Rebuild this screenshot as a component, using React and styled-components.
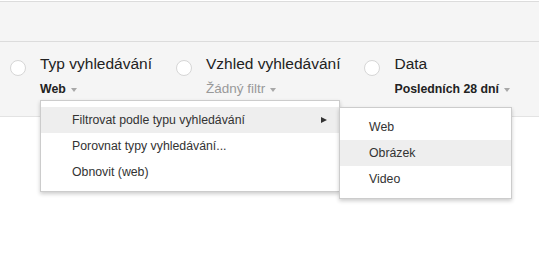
import React from 'react'
import styled, { createGlobalStyle } from 'styled-components'

const GlobalStyle = createGlobalStyle`
  body {
    margin: 0;
    background: #fff;
    font-family: "Liberation Sans", Arial, sans-serif;
  }
`

const filters = [
  { title: 'Typ vyhledávání', value: 'Web', bold: true },
  { title: 'Vzhled vyhledávání', value: 'Žádný filtr', bold: false },
  { title: 'Data', value: 'Posledních 28 dní', bold: true },
]

const menuItems = [
  { label: 'Filtrovat podle typu vyhledávání', sub: true, active: true },
  { label: 'Porovnat typy vyhledávání...' },
  { label: 'Obnovit (web)' },
]

const subItems = [
  { label: 'Web' },
  { label: 'Obrázek', active: true },
  { label: 'Video' },
]

function App() {
  return (
    <Page>
      <GlobalStyle />
      <TopBar />
      <FilterBar>
        {filters.map((f) => (
          <Group key={f.title}>
            <Radio />
            <Labels>
              <Title>{f.title}</Title>
              <Value bold={f.bold}>
                {f.value}
                <Caret />
              </Value>
            </Labels>
          </Group>
        ))}
        <Menu>
          {menuItems.map((item) => (
            <MenuItem key={item.label} active={item.active}>
              {item.label}
              {item.sub && <SubArrow />}
              {item.sub && (
                <SubMenu>
                  {subItems.map((s) => (
                    <MenuItem key={s.label} active={s.active} narrow>
                      {s.label}
                    </MenuItem>
                  ))}
                </SubMenu>
              )}
            </MenuItem>
          ))}
        </Menu>
      </FilterBar>
    </Page>
  )
}

export default App

const Page = styled.div`
  width: 539px;
  height: 255px;
  padding-top: 1px;
  box-sizing: border-box;
  overflow: hidden;
`
const TopBar = styled.div`
  height: 39px;
  background: #f5f5f5;
  border-top: 1px solid #dcdcdc;
  border-bottom: 1px solid #dcdcdc;
`
const FilterBar = styled.div`
  position: relative;
  height: 75px;
  box-sizing: border-box;
  padding: 12px 0 0 10px;
  display: flex;
  gap: 24px;
  background: #f5f5f5;
  border-bottom: 1px solid #e3e3e3;
`
const Group = styled.div`
  display: flex;
  align-items: flex-start;
`
const Radio = styled.span`
  width: 14px;
  height: 14px;
  margin-top: 6px;
  margin-right: 13px;
  border-radius: 50%;
  background: #fff;
  border: 1px solid #d6d6d6;
  flex-shrink: 0;
`
const Labels = styled.div`
  display: flex;
  flex-direction: column;
  padding-left: 1px;
`
const Title = styled.div`
  font-size: 15.5px;
  line-height: 20px;
  color: #222;
  white-space: nowrap;
`
const Value = styled.div`
  margin-top: 7px;
  display: flex;
  align-items: center;
  font-size: ${(p) => (p.bold ? '12.3px' : '13.5px')};
  font-weight: ${(p) => (p.bold ? 'bold' : 'normal')};
  color: ${(p) => (p.bold ? '#222' : '#999')};
  line-height: 16px;
  white-space: nowrap;
`
const Caret = styled.span`
  margin-left: 5px;
  margin-top: 2px;
  width: 0;
  height: 0;
  border-left: 3.5px solid transparent;
  border-right: 3.5px solid transparent;
  border-top: 4px solid #a8a8a8;
`
const Menu = styled.div`
  position: absolute;
  left: 40px;
  top: 58px;
  width: 298px;
  padding: 6px 0;
  background: #fff;
  border: 1px solid rgba(0, 0, 0, 0.2);
  box-shadow: 0 2px 4px rgba(0, 0, 0, 0.2);
  z-index: 2;
`
const MenuItem = styled.div`
  position: relative;
  height: 26px;
  line-height: 26px;
  padding-left: ${(p) => (p.narrow ? '29px' : '31px')};
  font-size: 12.3px;
  color: #333;
  white-space: nowrap;
  background: ${(p) => (p.active ? '#eeeeee' : 'transparent')};
`
const SubArrow = styled.span`
  position: absolute;
  right: 12px;
  top: 10px;
  width: 0;
  height: 0;
  border-top: 3.5px solid transparent;
  border-bottom: 3.5px solid transparent;
  border-left: 6px solid #333;
`
const SubMenu = styled.div`
  position: absolute;
  left: 100%;
  top: 0;
  width: 171px;
  padding: 6px 0;
  background: #fff;
  border: 1px solid rgba(0, 0, 0, 0.2);
  box-shadow: 0 2px 4px rgba(0, 0, 0, 0.2);
  z-index: 3;
`
